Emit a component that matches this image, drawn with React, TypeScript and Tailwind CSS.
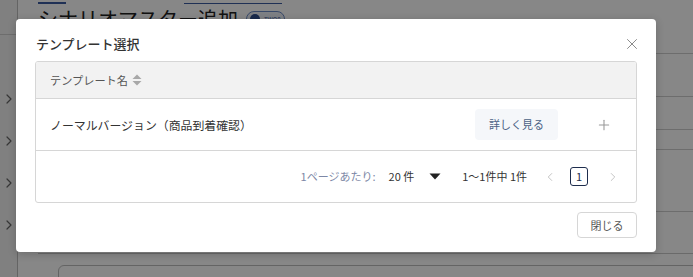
import { X, Plus, ChevronLeft, ChevronRight, ChevronRight as Chev } from "lucide-react";

const font = { fontFamily: '"Noto Sans CJK JP", "Noto Sans", sans-serif' };

function Background() {
  return (
    <div className="flex h-[277px] w-[693px] bg-white" style={font}>
      <div className="flex w-[18px] shrink-0 flex-col border-r border-[#bdbdbd] bg-[#f1f1f1]">
        <div className="h-[35px] border-b border-[#cfcfcf]" />
        <div className="flex flex-col gap-[26px] pt-[56px] pl-[1px] text-[#666]">
          {[0, 1, 2, 3].map((i) => (
            <Chev key={i} className="h-4 w-4" strokeWidth={1.8} />
          ))}
        </div>
      </div>
      <div className="relative flex-1">
        <div className="flex h-[4px] gap-[118px] pl-[20px]">
          <div className="w-[28px] border-b-2 border-[#3b5ba0]" />
          <div className="w-[98px] border-b border-[#3b5ba0]" />
        </div>
        <div className="flex items-center gap-2 pl-[20px] pt-[2px]">
          <span className="text-[20px] leading-[26px] text-[#222]">シナリオマスター追加</span>
          <span className="flex h-[16px] items-center gap-1 rounded-full border border-[#6b8bc7] bg-[#eef2fa] px-[3px] text-[6px] text-[#3b5ba0]">
            <span className="h-[10px] w-[10px] rounded-full bg-[#2f4f8f]" />
            TWO8
          </span>
        </div>
        <div className="absolute right-0 top-[53px] flex w-[37px] flex-col">
          <div className="h-[43px] border-t border-[#cfcfcf]" />
          <div className="h-[33px] border-t border-[#cfcfcf]" />
          <div className="h-[20px] border-t border-[#cfcfcf]" />
          <div className="h-[62px] border-t border-[#cfcfcf]" />
          <div className="border-t border-[#cfcfcf]" />
        </div>
        <div className="absolute left-[20px] top-[253px] h-[1px] w-[700px] bg-[#c8c8c8]" />
        <div className="absolute left-[40px] top-[265px] h-[30px] w-[700px] rounded-[6px] border border-[#bdbdbd]" />
      </div>
    </div>
  );
}

function SortIcon() {
  return (
    <svg width="10" height="12" viewBox="0 0 10 12" className="ml-[4px]">
      <path d="M5 0.5 L9.5 5 H0.5 Z" fill="#a8a8a8" />
      <path d="M5 11.5 L9.5 7 H0.5 Z" fill="#a8a8a8" />
    </svg>
  );
}

export default function App() {
  return (
    <div className="relative h-[277px] w-[693px] overflow-hidden">
      <Background />
      <div className="absolute inset-0 bg-black/[0.47]" />
      <div
        className="absolute left-[16px] top-[19px] flex w-[640px] flex-col rounded-[4px] bg-white px-[19px] shadow-[0_2px_8px_rgba(0,0,0,0.2)]"
        style={font}
      >
        <div className="flex h-[42px] items-center justify-between pt-[8px]">
          <h2 className="pl-[1px] text-[13px] font-medium text-[#333]">テンプレート選択</h2>
          <X className="mr-[-4px] h-[18px] w-[18px] text-[#888]" strokeWidth={1.3} />
        </div>
        <div className="overflow-hidden rounded-[3px] border border-[#d6d6d6]">
          <div className="flex h-[37px] items-center border-b border-[#d6d6d6] bg-[#f2f2f2] pl-[14px] text-[11.2px] text-[#555]">
            テンプレート名
            <SortIcon />
          </div>
          <div className="flex h-[52px] items-center border-b border-[#d6d6d6] pl-[14px] pr-[24px]">
            <span className="flex-1 text-[11.9px] text-[#333]">ノーマルバージョン（商品到着確認）</span>
            <button className="h-[31px] w-[83px] rounded-[4px] bg-[#f5f7fa] text-[11px] text-[#4b6185]">
              詳しく見る
            </button>
            <Plus className="ml-[38px] h-[16px] w-[16px] text-[#999]" strokeWidth={1.6} />
          </div>
          <div className="flex h-[51px] items-center justify-end pr-[16px] text-[11px]">
            <span className="text-[#7d88a6]">1ページあたり:</span>
            <span className="ml-[13px] text-[#333]">20 件</span>
            <svg width="12" height="7" viewBox="0 0 12 7" className="ml-[15px]">
              <path d="M0.5 0.5 H11.5 L6 6.5 Z" fill="#222" />
            </svg>
            <span className="ml-[21px] text-[#333]">1〜1件中 1件</span>
            <ChevronLeft className="ml-[16px] h-[14px] w-[14px] text-[#bbb]" strokeWidth={1.5} />
            <span className="ml-[13px] flex h-[19px] w-[18px] items-center justify-center rounded-[3px] border border-[#1e2d4d] text-[11px] text-[#1e2d4d]">
              1
            </span>
            <ChevronRight className="ml-[18px] h-[14px] w-[14px] text-[#bbb]" strokeWidth={1.5} />
          </div>
        </div>
        <div className="flex justify-end pb-[14px] pt-[9px]">
          <button className="h-[26px] w-[60px] rounded-[4px] border border-[#d6d6d6] text-[11px] text-[#555]">
            閉じる
          </button>
        </div>
      </div>
    </div>
  );
}
